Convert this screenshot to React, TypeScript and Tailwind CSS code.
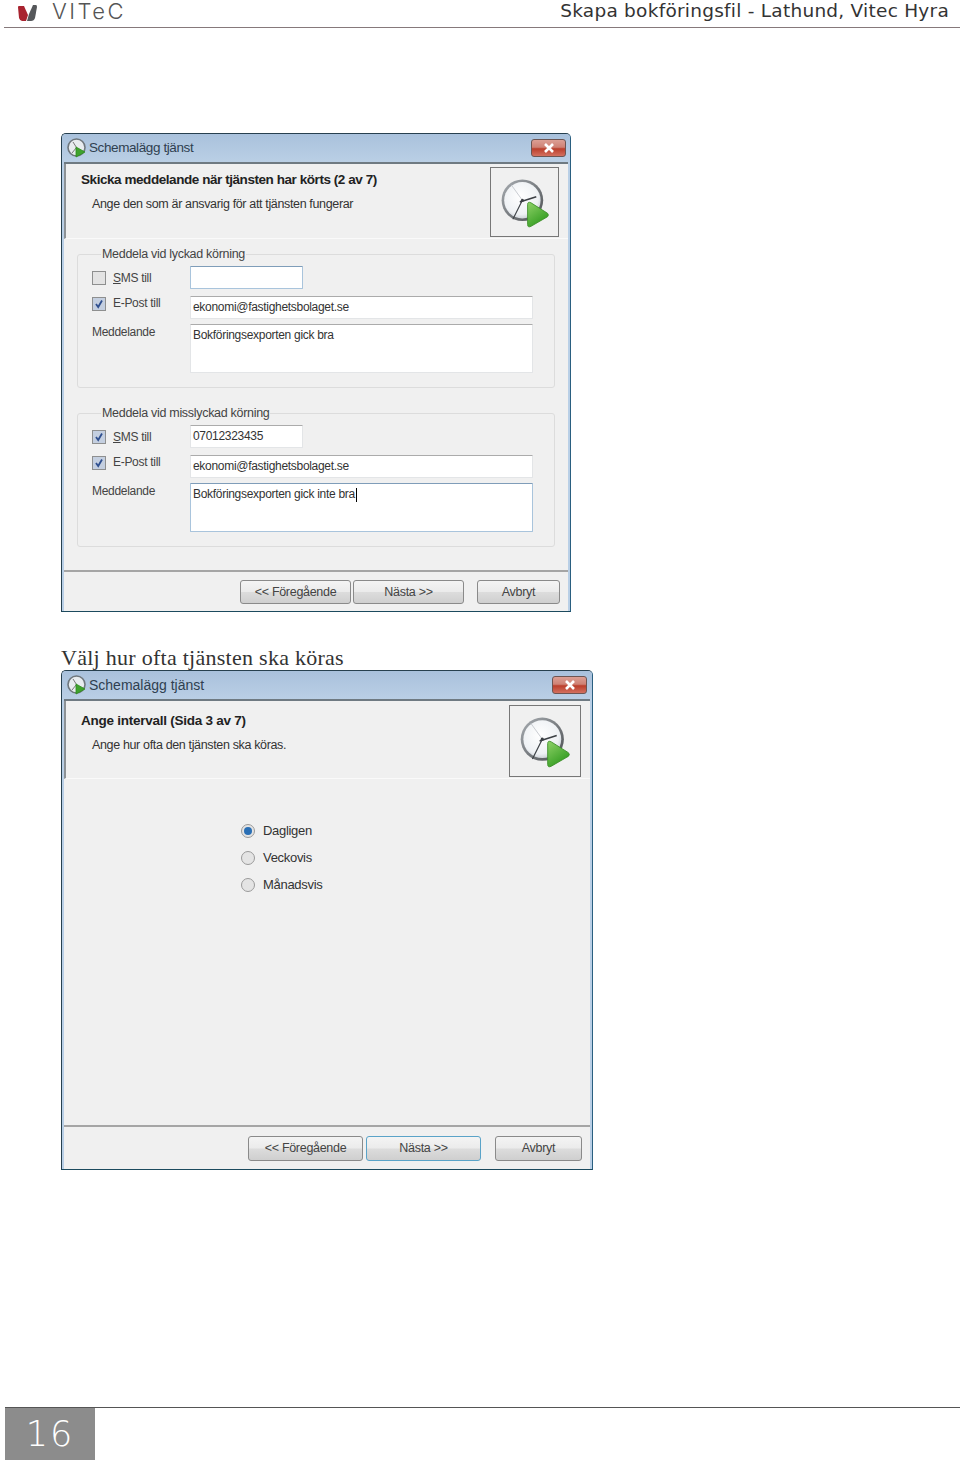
import type { ReactNode } from "react";

const ClockIcon = ({ size }: { size: number }) => (
  <svg width={size} height={size} viewBox="0 0 60 60">
    <defs>
      <radialGradient id="face" cx="45%" cy="40%" r="65%">
        <stop offset="0%" stopColor="#ffffff" />
        <stop offset="75%" stopColor="#eef1f4" />
        <stop offset="100%" stopColor="#c2c8cf" />
      </radialGradient>
      <linearGradient id="rim" x1="0" y1="0" x2="1" y2="1">
        <stop offset="0%" stopColor="#a9aeb3" />
        <stop offset="100%" stopColor="#4a4d50" />
      </linearGradient>
      <linearGradient id="play" x1="0" y1="0" x2="0.6" y2="1">
        <stop offset="0%" stopColor="#8fd268" />
        <stop offset="100%" stopColor="#2f9a1e" />
      </linearGradient>
    </defs>
    <circle cx="27" cy="28" r="24" fill="url(#rim)" />
    <circle cx="27" cy="28" r="21" fill="url(#face)" />
    <path d="M27 28 L14 10" stroke="#b5bac0" strokeWidth="0.8" />
    <path d="M27 28 L16 50" stroke="#3c4045" strokeWidth="1.3" />
    <path d="M24 30 L43 24" stroke="#3c4045" strokeWidth="1.8" />
    <circle cx="27" cy="28" r="1.8" fill="#3c4045" />
    <path
      d="M33 33 Q33 29 37 31 L56 43 Q58 45 56 47 L37 58 Q33 60 33 56 Z"
      fill="url(#play)"
      stroke="#3c8f28"
      strokeWidth="1"
    />
  </svg>
);

const AppIcon = () => (
  <svg width="20" height="20" viewBox="0 0 20 20" className="shrink-0">
    <circle cx="9.5" cy="9.5" r="8.5" fill="#e8ecef" stroke="#6f777d" strokeWidth="1.6" />
    <path d="M9.5 9.5 L6 4 M9.5 9.5 L5 15" stroke="#777" strokeWidth="1" />
    <path d="M9 9 L18 14 L9 19 Z" fill="#3fa32c" stroke="#2f8a20" strokeWidth="0.8" strokeLinejoin="round" />
  </svg>
);

const CloseButton = () => (
  <div className="flex h-[18px] w-[35px] items-center justify-center rounded-[3px] border border-[#6e5552] bg-[linear-gradient(#dc9f94_0%,#cf8275_45%,#bb3f2c_55%,#d3705f_100%)]">
    <svg width="14" height="10" viewBox="0 0 14 10">
      <path d="M3 1 L11 9 M11 1 L3 9" stroke="#ffffff" strokeWidth="2.6" />
    </svg>
  </div>
);

const CheckBox = ({ checked }: { checked: boolean }) => (
  <div className={`flex h-[14px] w-[14px] shrink-0 items-center justify-center border border-[#8e8f8f] ${checked ? "bg-[#c4cfe0]" : "bg-[#e3e3e3]"}`}>
    {checked && (
      <svg width="10" height="10" viewBox="0 0 10 10">
        <path d="M2 5 L4.2 8 L8 1.5" fill="none" stroke="#2f4f8f" strokeWidth="1.8" />
      </svg>
    )}
  </div>
);

const Radio = ({ checked }: { checked: boolean }) => (
  <div className="flex h-[14px] w-[14px] shrink-0 items-center justify-center rounded-full border border-[#9a9a9a] bg-[#e4e4e4]">
    {checked && <div className="h-[8px] w-[8px] rounded-full bg-[#2a6fb5]" />}
  </div>
);

const Field = ({ children, width, height, focus }: { children?: ReactNode; width: string; height: string; focus?: boolean }) => (
  <div className={`${width} ${height} shrink-0 rounded-[1px] border bg-white pl-[2px] text-[12px] leading-[21px] tracking-[-0.3px] text-[#333] ${focus ? "border-[#a9c4dc] border-t-[#7f9db9]" : "border-[#e3e5e7] border-t-[#ababab]"}`}>
    {children}
  </div>
);

const NotifyGroup = ({ title, sms, smsChecked, smsFocus, message, caret, top }: {
  title: string;
  sms?: string;
  smsChecked: boolean;
  smsFocus?: boolean;
  message: string;
  caret?: boolean;
  top: string;
}) => (
  <fieldset className={`mx-[13px] ${top} h-[141px] rounded-[3px] border border-[#dcdcdc] pl-[14px]`}>
    <legend className="ml-[9px] px-px text-[12.5px] leading-[14px] tracking-[-0.3px] text-[#444]">{title}</legend>
    <div className="flex flex-col pt-[5px]">
      <div className="flex h-[23px] items-center">
        <CheckBox checked={smsChecked} />
        <span className="ml-[7px] w-[77px] text-[12px] tracking-[-0.3px] text-[#444]"><span className="underline">S</span>MS till</span>
        <Field width="w-[113px]" height="h-[23px]" focus={smsFocus}>{sms}</Field>
      </div>
      <div className="mt-[7px] flex h-[23px] items-start">
        <div className="mt-[1px]"><CheckBox checked /></div>
        <span className="ml-[7px] w-[77px] text-[12px] leading-[14px] tracking-[-0.3px] text-[#444]">E-Post till</span>
        <Field width="w-[343px]" height="h-[23px]">ekonomi@fastighetsbolaget.se</Field>
      </div>
      <div className="mt-[5px] flex items-start">
        <span className="w-[98px] pt-px text-[12px] leading-[14px] tracking-[-0.3px] text-[#444]">Meddelande</span>
        <Field width="w-[343px]" height="h-[49px]" focus={caret}>
          <span className="flex items-center">{message}{caret && <span className="ml-px h-[14px] w-px bg-black" />}</span>
        </Field>
      </div>
    </div>
  </fieldset>
);

const WizardButton = ({ label, width, focus }: { label: string; width: string; focus?: boolean }) => (
  <div className={`${width} flex items-center justify-center rounded-[3px] border bg-[linear-gradient(#f4f4f4_0%,#ebebeb_48%,#dcdcdc_52%,#cfcfcf_100%)] text-[12.5px] tracking-[-0.3px] text-[#444] ${focus ? "border-[#5aa3c8]" : "border-[#8a8a8a]"}`}>
    {label}
  </div>
);

const Dialog = ({ width, height, title, heading, sub, big, children, footer }: {
  width: string;
  height: string;
  title: string;
  heading: string;
  sub: string;
  big?: boolean;
  children: ReactNode;
  footer: ReactNode;
}) => (
  <div className={`${width} ${height} ml-[61px] flex shrink-0 flex-col rounded-t-[5px] border border-[#27404f] border-b-[#1c4a5e] border-r-[#2a5f80] bg-[#b9cfe6]`}>
    <div className={`flex h-[28px] shrink-0 items-center justify-between rounded-t-[4px] bg-[linear-gradient(#a9c1dc,#bacfe5)] pl-[5px] ${big ? "pr-[5px]" : "pr-[4px]"}`}>
      <div className="flex items-center gap-[2px]">
        <AppIcon />
        <span className={`text-[#2f3f50] ${big ? "text-[14px] tracking-[0px]" : "text-[13.5px] tracking-[-0.4px]"}`}>{title}</span>
      </div>
      <CloseButton />
    </div>
    <div className="mx-[2px] flex min-h-0 flex-1 flex-col border-t-2 border-[#6f7a82] bg-[#f0f0f0]">
      <div className={`flex shrink-0 justify-between border-b border-l-2 border-b-[#fafafa] border-l-[#8d9296] ${big ? "h-[78px] pl-[15px] pr-[9px] pt-[4px]" : "h-[75px] pl-[15px] pr-[9px] pt-[3px]"}`}>
        <div>
          <div className={`font-bold text-[#222] ${big ? "mt-[6px] text-[13.5px] tracking-[-0.25px]" : "mt-[3px] text-[13.5px] tracking-[-0.44px]"}`}>{heading}</div>
          <div className={`ml-[11px] text-[12.5px] tracking-[-0.35px] text-[#333] ${big ? "mt-[5px]" : "mt-[5px]"}`}>{sub}</div>
        </div>
        <div className={`flex shrink-0 items-center justify-center border border-[#777] ${big ? "h-[72px] w-[72px]" : "h-[70px] w-[69px]"}`}>
          <ClockIcon size={big ? 54 : 52} />
        </div>
      </div>
      <div className="min-h-0 flex-1">{children}</div>
      <div className={`flex shrink-0 justify-end border-t-2 border-[#a5a5a5] ${big ? "h-[44px] pt-[9px] pr-[8px]" : "h-[41px] pt-[8px] pr-[8px]"}`}>
        {footer}
      </div>
    </div>
  </div>
);

const RadioRow = ({ label, checked }: { label: string; checked?: boolean }) => (
  <div className="flex h-[14px] items-center gap-[8px]">
    <Radio checked={!!checked} />
    <span className="text-[13px] tracking-[-0.3px] text-[#333]">{label}</span>
  </div>
);

export default function App() {
  return (
    <div className="flex h-[1461px] w-[960px] flex-col overflow-hidden bg-white font-['Liberation_Sans',sans-serif]">
      <header className="ml-[4px] flex h-[28px] shrink-0 items-start justify-between border-b border-[#86797b] pl-[12px] pr-[11px]">
        <div className="flex items-center">
          <svg width="21" height="18" viewBox="0 0 21 18" className="mt-[3px]">
            <path d="M2 3 Q2 2 3 2 L8 2 L12 11 L10 17 L6 17 Q4 17 3 14 Z" fill="#a8232f" />
            <path d="M13 10 L17 1 L20 1 Q21 1 21 3 L19 14 Q18 17 15 17 L11 17 Z" fill="#55575a" />
          </svg>
          <span className="ml-[15px] font-['Inter',sans-serif] text-[22px] leading-[22px] font-light tracking-[2.5px] text-[#555]">VITeC</span>
        </div>
        <span className="font-['DejaVu_Sans',sans-serif] text-[18.5px] leading-[22px] font-normal tracking-[0.25px] text-[#333]">
          Skapa bokföringsfil - Lathund, Vitec Hyra
        </span>
      </header>

      <div className="mt-[105px] flex flex-col">
        <Dialog
          width="w-[510px]"
          height="h-[479px]"
          title="Schemalägg tjänst"
          heading="Skicka meddelande när tjänsten har körts (2 av 7)"
          sub="Ange den som är ansvarig för att tjänsten fungerar"
          footer={
            <div className="flex h-[24px]">
              <WizardButton label="<< Föregående" width="w-[111px]" />
              <div className="ml-[2px]"><WizardButton label="Nästa >>" width="h-full w-[111px]" /></div>
              <div className="ml-[13px]"><WizardButton label="Avbryt" width="h-full w-[83px]" /></div>
            </div>
          }
        >
          <NotifyGroup top="mt-[8px]" title="Meddela vid lyckad körning" smsChecked={false} smsFocus message="Bokföringsexporten gick bra" />
          <NotifyGroup top="mt-[18px]" title="Meddela vid misslyckad körning" sms="07012323435" smsChecked message="Bokföringsexporten gick inte bra" caret />
        </Dialog>

        <p className="ml-[61px] mt-[33px] h-[25px] font-['Liberation_Serif',serif] text-[22px] leading-[25px] tracking-[0.27px] text-[#333]">
          Välj hur ofta tjänsten ska köras
        </p>

        <Dialog
          width="w-[532px]"
          height="h-[500px]"
          big
          title="Schemalägg tjänst"
          heading="Ange intervall (Sida 3 av 7)"
          sub="Ange hur ofta den tjänsten ska köras."
          footer={
            <div className="flex h-[25px]">
              <WizardButton label="<< Föregående" width="w-[115px]" />
              <div className="ml-[3px]"><WizardButton label="Nästa >>" width="h-full w-[115px]" focus /></div>
              <div className="ml-[14px]"><WizardButton label="Avbryt" width="h-full w-[87px]" /></div>
            </div>
          }
        >
          <div className="flex flex-col gap-[13px] pl-[177px] pt-[45px]">
            <RadioRow label="Dagligen" checked />
            <RadioRow label="Veckovis" />
            <RadioRow label="Månadsvis" />
          </div>
        </Dialog>
      </div>

      <footer className="ml-[5px] mt-auto mb-px flex h-[53px] shrink-0 border-t border-[#555]">
        <div className="flex w-[90px] items-center justify-center bg-[#8c8c8c] font-['DejaVu_Sans',sans-serif] text-[35px] font-extralight tracking-[2px] text-white">
          16
        </div>
      </footer>
    </div>
  );
}
